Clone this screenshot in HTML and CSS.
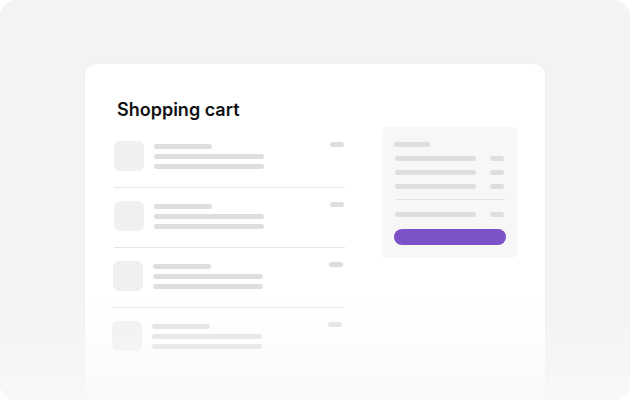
FILE: index.html
```html
<!DOCTYPE html>
<html>
<head>
<meta charset="utf-8">
<link rel="stylesheet" href="styles.css">
</head>
<body>
<div class="stage">
  <div class="card">
    <h1 class="title">Shopping cart</h1>
    <div class="cols">
      <div class="list">
        <div class="item">
          <div class="thumb"></div>
          <div class="lines"><span class="bar w58"></span><span class="bar w110"></span><span class="bar w110"></span></div>
          <span class="bar price"></span>
        </div>
        <div class="item">
          <div class="thumb"></div>
          <div class="lines"><span class="bar w58"></span><span class="bar w110"></span><span class="bar w110"></span></div>
          <span class="bar price"></span>
        </div>
        <div class="item shift1">
          <div class="thumb"></div>
          <div class="lines"><span class="bar w58"></span><span class="bar w110"></span><span class="bar w110"></span></div>
          <span class="bar price"></span>
        </div>
        <div class="item shift2 faded">
          <div class="thumb"></div>
          <div class="lines"><span class="bar w58"></span><span class="bar w110"></span><span class="bar w110"></span></div>
          <span class="bar price"></span>
        </div>
      </div>
      <div class="summary">
        <span class="bar head"></span>
        <div class="srow"><span class="bar w81"></span><span class="bar price"></span></div>
        <div class="srow"><span class="bar w81"></span><span class="bar price"></span></div>
        <div class="srow"><span class="bar w81"></span><span class="bar price"></span></div>
        <div class="sdiv"></div>
        <div class="srow"><span class="bar w81"></span><span class="bar price"></span></div>
        <div class="btn"></div>
      </div>
    </div>
  </div>
  <div class="fade"></div>
</div>
</body>
</html>
```
FILE: styles.css
```css
* { box-sizing: border-box; }
html, body { margin: 0; padding: 0; background: #ffffff; }
body { font-family: Inter, "Noto Sans", sans-serif; }
.stage {
  position: relative;
  width: 630px;
  height: 400px;
  background: #f2f3f5;
  border-radius: 16px;
  overflow: hidden;
  padding: 64px 0 0 85px;
}
.card {
  width: 460px;
  height: 400px;
  background: #ffffff;
  border-radius: 12px;
  box-shadow: 0 1px 3px rgba(0, 0, 0, 0.04);
  padding: 35px 28px 0 29px;
}
.title {
  margin: 0 0 0 3px;
  font-size: 18px;
  line-height: 22px;
  font-weight: 600;
  color: #111111;
  letter-spacing: 0;
  height: 28px;
}
.cols {
  display: flex;
  gap: 37px;
  align-items: flex-start;
}
.list {
  width: 231px;
  padding-top: 14px;
}
.item {
  display: flex;
  align-items: flex-start;
  padding: 13px 0 16px;
  border-bottom: 1px solid #e6e6e6;
}
.item:first-child { padding-top: 0; }
.shift1 { transform: translateX(-1px); }
.shift2 { transform: translateX(-2px); }
.faded { opacity: 0.9; border-bottom-color: transparent; }
.thumb {
  width: 30px;
  height: 30px;
  border-radius: 6px;
  background: #f0f0f0;
  flex: none;
}
.lines {
  display: flex;
  flex-direction: column;
  gap: 5px;
  margin: 3px 0 0 10px;
  flex: 1;
}
.bar {
  display: block;
  height: 5px;
  border-radius: 3px;
  background: #dedede;
}
.w58 { width: 58px; }
.w110 { width: 110px; }
.w81 { width: 81px; }
.price { width: 14px; margin: 1px 1px 0 0; flex: none; }
.summary {
  width: 135px;
  background: #f7f7f7;
  border-radius: 6px;
  padding: 15px 11px 13px 12px;
  display: flex;
  flex-direction: column;
}
.head { width: 36px; }
.srow {
  display: flex;
  justify-content: space-between;
  margin: 9px 2px 0 1px;
}
.srow .price { margin: 0; }
.sdiv {
  height: 1px;
  background: #e2e2e2;
  margin: 10px 1px 0 2px;
}
.sdiv + .srow { margin-top: 12px; }
.btn {
  margin-top: 12px;
  height: 16px;
  border-radius: 8px;
  background: #7b52c8;
}
.fade {
  position: absolute;
  left: 0;
  right: 0;
  bottom: 0;
  height: 100px;
  background: linear-gradient(to bottom, rgba(248, 249, 250, 0), rgba(248, 249, 250, 0.55) 70%, rgba(248, 249, 250, 0.95));
  pointer-events: none;
}
```
